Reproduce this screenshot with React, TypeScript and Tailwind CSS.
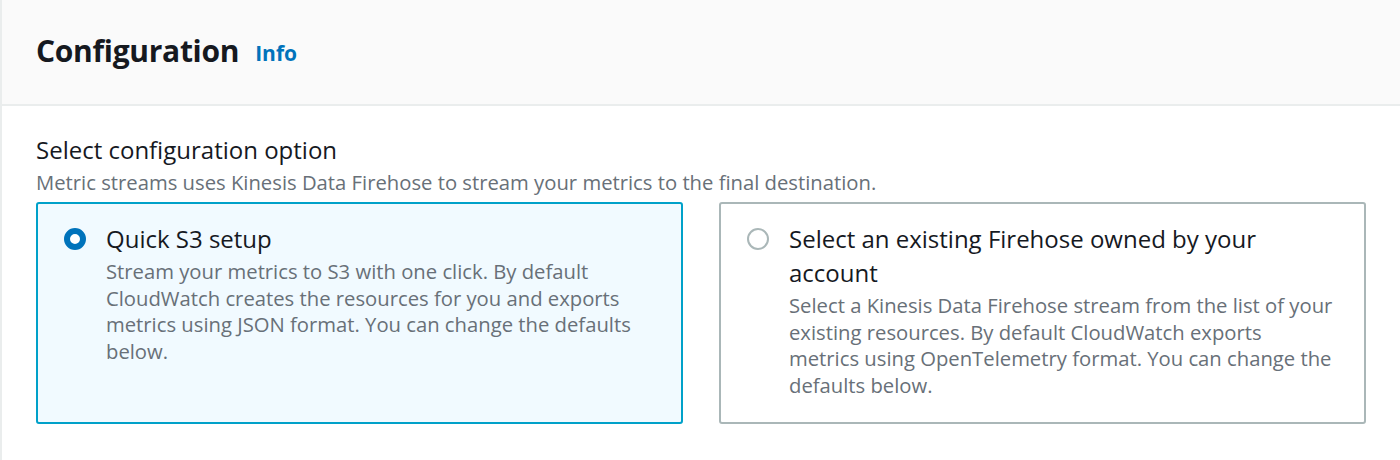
import { useState } from 'react'

type Option = {
  id: string
  label: string
  description: string
}

const options: Option[] = [
  {
    id: 'quick',
    label: 'Quick S3 setup',
    description:
      'Stream your metrics to S3 with one click. By default CloudWatch creates the resources for you and exports metrics using JSON format. You can change the defaults below.',
  },
  {
    id: 'existing',
    label: 'Select an existing Firehose owned by your account',
    description:
      'Select a Kinesis Data Firehose stream from the list of your existing resources. By default CloudWatch exports metrics using OpenTelemetry format. You can change the defaults below.',
  },
]

function Radio({ checked }: { checked: boolean }) {
  return checked ? (
    <span className="mt-[6px] block h-[22px] w-[22px] shrink-0 rounded-full border-[6px] border-[#0073bb] bg-white" />
  ) : (
    <span className="mt-[6px] block h-[22px] w-[22px] shrink-0 rounded-full border-2 border-[#aab7b8] bg-white" />
  )
}

export default function App() {
  const [selected, setSelected] = useState('quick')

  return (
    <div
      className="h-[460px] w-full overflow-hidden border-l-2 border-[#eaeded] bg-white text-[#16191f]"
      style={{ fontFamily: '"Open Sans", "Noto Sans", sans-serif' }}
    >
      <div className="flex h-[106px] items-center gap-4 border-b-2 border-[#eaeded] bg-[#fafafa] px-[34px] pb-[2px]">
        <h2 className="text-[30px] font-bold leading-none tracking-[-0.3px]">Configuration</h2>
        <a className="mt-[4px] text-[21px] font-bold leading-none text-[#0073bb]">Info</a>
      </div>

      <div className="px-[34px] pt-[28px]">
        <div className="text-[24px] leading-[32px]">Select configuration option</div>
        <div className="mt-[3px] text-[20.25px] leading-[26px] text-[#687078]">
          Metric streams uses Kinesis Data Firehose to stream your metrics to the final destination.
        </div>

        <div className="mt-[7px] grid grid-cols-2 gap-[36px]">
          {options.map((o) => {
            const active = selected === o.id
            return (
              <div
                key={o.id}
                onClick={() => setSelected(o.id)}
                className={
                  active
                    ? 'flex h-[222px] cursor-pointer gap-[20px] rounded-[3px] border-2 border-[#00a1c9] bg-[#f1faff] pl-[26px] pr-[31px] pt-[18px]'
                    : 'flex h-[222px] cursor-pointer gap-[20px] rounded-[3px] border-2 border-[#aab7b8] bg-white pl-[26px] pr-[31px] pt-[18px]'
                }
              >
                <Radio checked={active} />
                <div>
                  <div className="text-[24px] leading-[34px]">{o.label}</div>
                  <div className="mt-[2px] text-[20.25px] leading-[26.7px] text-[#687078]">{o.description}</div>
                </div>
              </div>
            )
          })}
        </div>
      </div>
    </div>
  )
}
